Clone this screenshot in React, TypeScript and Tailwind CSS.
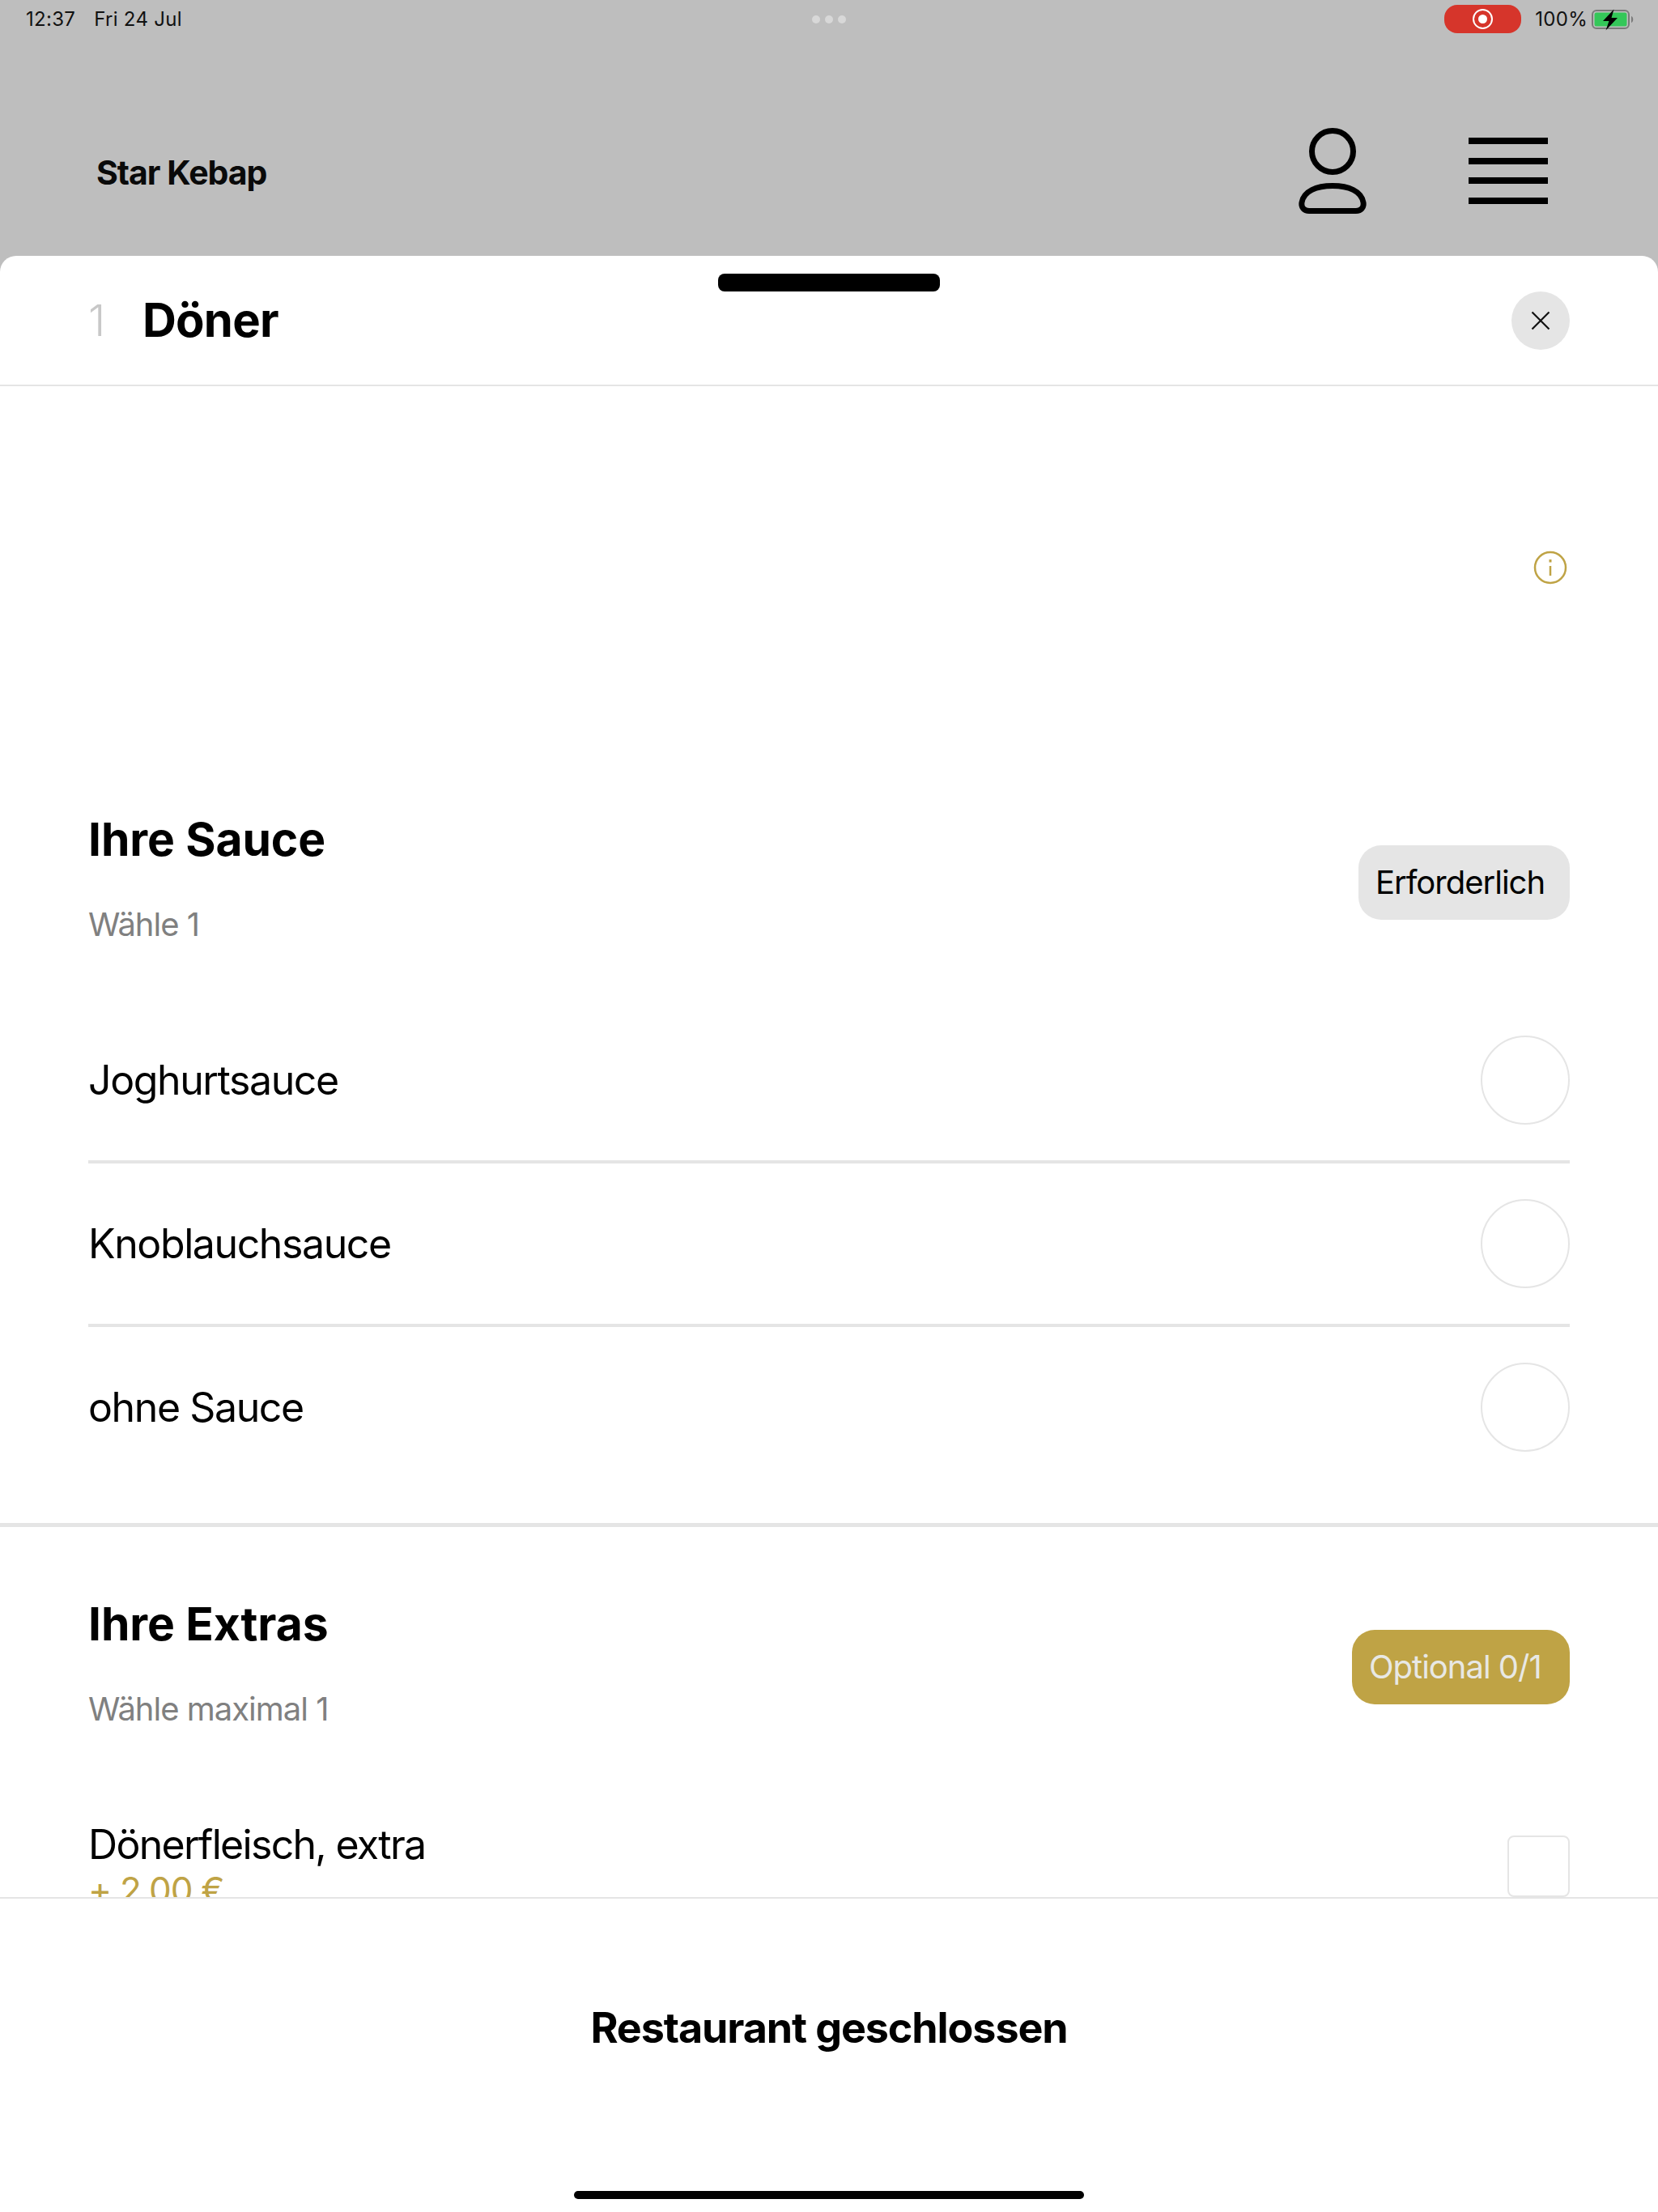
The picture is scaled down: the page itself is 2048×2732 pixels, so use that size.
const font = "font-['Inter','Liberation_Sans',sans-serif]";

function UserIcon() {
  return (
    <svg width="84" height="106" viewBox="0 0 84 106" fill="none" stroke="#000" strokeWidth="7">
      <circle cx="42" cy="29" r="25.5" />
      <path d="M13 102.5 H71 C77 102.5 81 98.5 80 92 C77.5 78 62 71.5 42 71.5 C22 71.5 6.5 78 4 92 C3 98.5 7 102.5 13 102.5 Z" />
    </svg>
  );
}

function MenuIcon() {
  return (
    <div className="flex w-[98px] flex-col gap-[16.4px]">
      <div className="h-2 bg-black" />
      <div className="h-2 bg-black" />
      <div className="h-2 bg-black" />
      <div className="h-2 bg-black" />
    </div>
  );
}

function Battery() {
  return (
    <svg width="54" height="28" viewBox="0 0 54 28" fill="none">
      <rect x="1" y="3" width="45" height="22" rx="5" stroke="#7a7a7a" strokeWidth="2" />
      <rect x="3.5" y="5.5" width="40" height="17" rx="2.5" fill="#34c759" />
      <path d="M49 10 C52 11 52 17 49 18 Z" fill="#7a7a7a" />
      <path d="M27.5 1.5 L14 16 H21.5 L17.5 27.5 L32 12 H24.5 Z" fill="#000" />
    </svg>
  );
}

function StatusBar() {
  return (
    <div className="relative flex h-[47px] items-center justify-between pl-[32px] pr-[28px] text-[24px] tracking-[0.3px] text-[#111]">
      <div className="flex gap-[23px]">
        <span>12:37</span>
        <span>Fri 24 Jul</span>
      </div>
      <div className="absolute left-[1003px] top-[19px] flex gap-[6px]">
        <div className="h-[10px] w-[10px] rounded-full bg-[#d8d8d8]" />
        <div className="h-[10px] w-[10px] rounded-full bg-[#d8d8d8]" />
        <div className="h-[10px] w-[10px] rounded-full bg-[#d8d8d8]" />
      </div>
      <div className="flex items-center">
        <div className="mr-[17px] flex h-[35px] w-[95px] items-center justify-center rounded-[16px] bg-[#d6352b]">
          <div className="flex h-[25px] w-[25px] items-center justify-center rounded-full border-2 border-white">
            <div className="h-[11px] w-[11px] rounded-full bg-white" />
          </div>
        </div>
        <span className="mr-[5px]">100%</span>
        <Battery />
      </div>
    </div>
  );
}

function SectionHead({ title, sub, badge, gold }: { title: string; sub: string; badge: string; gold?: boolean }) {
  return (
    <div className="flex items-center justify-between">
      <div>
        <div className="text-[57px] leading-[70px] font-bold tracking-[-0.1px] text-black">{title}</div>
        <div className="mt-[35px] text-[40px] leading-[70px] tracking-[-1px] text-[#808080]">{sub}</div>
      </div>
      <div
        className={`flex h-[92px] items-center rounded-[28px] pl-[21px] text-[40px] tracking-[-1px] ${
          gold ? "w-[269px] bg-[#bfa345] text-[#e8e8e4]" : "w-[261px] bg-[#e5e5e5] text-black"
        }`}
      >
        {badge}
      </div>
    </div>
  );
}

function RadioRow({ label, last }: { label: string; last?: boolean }) {
  return (
    <div className={`flex h-[202px] items-center justify-between border-b-4 ${last ? "border-transparent" : "border-[#e5e5e5]"}`}>
      <span className="text-[50px] tracking-[-1.4px] text-black">{label}</span>
      <div className="h-[110px] w-[110px] rounded-full border-2 border-[#e5e5e5]" />
    </div>
  );
}

export default function App() {
  return (
    <div className={`flex h-[2732px] w-[2048px] flex-col overflow-hidden bg-[#bebebe] ${font}`}>
      <StatusBar />
      <div className="flex h-[269px] items-center justify-between pl-[119px] pr-[136px] pt-[59px]">
        <div className="mt-[4px] text-[41px] leading-[60px] font-bold tracking-[-1px] text-[#0a0a0a]">Star Kebap</div>
        <div className="flex items-center gap-[126px]">
          <UserIcon />
          <MenuIcon />
        </div>
      </div>

      {/* sheet */}
      <div className="relative flex flex-1 flex-col overflow-hidden rounded-t-[20px] bg-white">
        <div className="absolute left-[887px] top-[22px] h-[22px] w-[274px] rounded-[8px] bg-black" />
        <div className="flex h-[161px] shrink-0 items-center justify-between border-b-2 border-[#e5e5e5] px-[109px]">
          <div className="flex items-center">
            <span className="w-[67px] text-[54px] font-light text-[#c8c8c8]">1</span>
            <span className="text-[58px] font-bold tracking-[-0.8px] text-black">Döner</span>
          </div>
          <button className="flex h-[72px] w-[72px] items-center justify-center rounded-full bg-[#e5e5e5]">
            <svg width="24" height="24" viewBox="0 0 24 24" stroke="#111" strokeWidth="2.2">
              <path d="M1.5 1.5 L22.5 22.5 M22.5 1.5 L1.5 22.5" />
            </svg>
          </button>
        </div>

        <div className="h-[1866px] shrink-0 overflow-hidden">
          <div className="flex h-[525px] items-center justify-end pb-[77px] pr-[112px]">
            <svg width="42" height="42" viewBox="0 0 42 42" fill="none" stroke="#bfa345" strokeWidth="2.5">
              <circle cx="21" cy="21" r="19" />
              <path d="M21 19 V31" />
              <path d="M21 11 V14.5" strokeWidth="3" />
            </svg>
          </div>

          <div className="px-[109px]">
            <SectionHead title="Ihre Sauce" sub="Wähle 1" badge="Erforderlich" />
            <div className="mt-[58px]">
              <RadioRow label="Joghurtsauce" />
              <RadioRow label="Knoblauchsauce" />
              <RadioRow label="ohne Sauce" last />
            </div>
          </div>

          <div className="mt-[40px] border-t-[5px] border-[#e5e5e5] px-[109px] pt-[85px]">
            <SectionHead title="Ihre Extras" sub="Wähle maximal 1" badge="Optional 0/1" gold />
            <div className="mt-[104px] flex items-start justify-between">
              <div>
                <div className="text-[50px] leading-[56px] tracking-[-1.7px] text-black">Dönerfleisch, extra</div>
                <div className="text-[44px] leading-[56px] tracking-[-1.2px] text-[#bfa345]">+ 2,00 €</div>
              </div>
              <div className="mt-[17px] h-[76px] w-[77px] rounded-[8px] border-2 border-[#e5e5e5]" />
            </div>
          </div>
        </div>

        <div className="relative flex flex-1 flex-col items-center border-t-2 border-[#e5e5e5]">
          <div className="mt-[128px] text-[52px] leading-[64px] font-bold tracking-[-1.1px] text-black">Restaurant geschlossen</div>
          <div className="absolute bottom-[16px] h-[10px] w-[630px] rounded-full bg-black" />
        </div>
      </div>
    </div>
  );
}
